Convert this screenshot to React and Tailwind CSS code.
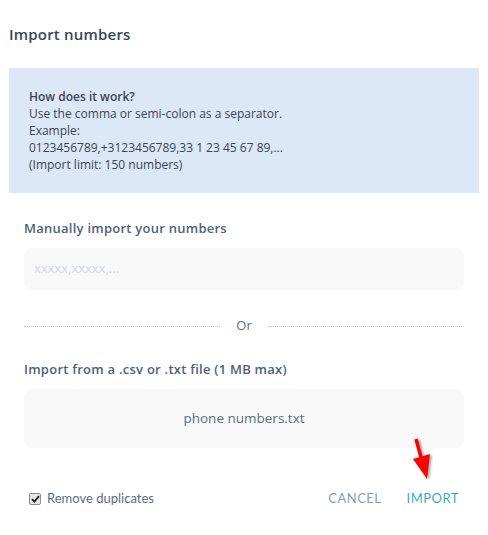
import React from 'react';

const App = () => {
    return (
        <div className="w-[488px] h-[535px] bg-white text-[#3d4a5c]" style={{ fontFamily: '"Open Sans", Lato, sans-serif' }}>
            <div className="pt-[24px] pl-[9px] h-[68px]">
                <h1 className="text-[15px] font-semibold leading-[20px] text-[#3a4656] tracking-[0.2px]">Import numbers</h1>
            </div>

            <div className="ml-[9px] w-[470px] h-[125px] bg-[#dce8f7] px-[20px] pt-[20px] text-[12px] leading-[17px] text-[#3b4452]">
                <p className="font-semibold">How does it work?</p>
                <p>Use the comma or semi-colon as a separator.</p>
                <p>Example:</p>
                <p>0123456789,+3123456789,33 1 23 45 67 89,...</p>
                <p>(Import limit: 150 numbers)</p>
            </div>

            <div className="px-[24px] w-[488px]">
                <h2 className="mt-[26px] text-[13px] font-semibold leading-[18px] tracking-[0.25px] text-[#4f5f7a]">Manually import your numbers</h2>
                <div className="mt-[11px] w-[440px] h-[42px] rounded-[8px] bg-[#f8f8f8] flex items-center px-[10px]">
                    <span className="text-[13px] text-[#d3d8df]">xxxxx,xxxxx,...</span>
                </div>

                <div className="mt-[26px] w-[440px] flex items-center h-[20px]">
                    <div className="flex-1 border-t border-dotted border-[#b9bfc7]"></div>
                    <span className="px-[16px] text-[13px] text-[#5e6e86]">Or</span>
                    <div className="flex-1 border-t border-dotted border-[#b9bfc7]"></div>
                </div>

                <h2 className="mt-[24px] text-[13px] font-semibold leading-[18px] tracking-[0.25px] text-[#4f5f7a]">Import from a .csv or .txt file (1 MB max)</h2>
                <div className="relative mt-[11px] w-[440px] h-[59px] rounded-[8px] bg-[#f8f8f8] flex items-center justify-center">
                    <span className="text-[13.5px] text-[#5d6d86]">phone numbers.txt</span>
                    <svg className="absolute left-[386px] top-[46px]" width="24" height="48" viewBox="0 0 24 48" style={{ filter: 'drop-shadow(2px 1px 1px rgba(0,0,0,0.35))' }}>
                        <line x1="6" y1="4" x2="12" y2="26" stroke="#ff0000" strokeWidth="3.5" strokeLinecap="butt" />
                        <polygon points="3,24 20,19 17,44" fill="#ff0000" />
                    </svg>
                </div>

                <div className="mt-[41px] flex items-center justify-between w-[440px]">
                    <label className="flex items-center ml-[5px]">
                        <span className="w-[12px] h-[12px] rounded-[2px] border border-[#8a8a8a] bg-[#e6e6e6] flex items-center justify-center">
                            <svg width="9" height="8" viewBox="0 0 9 8">
                                <path d="M1 4.2 L3.4 6.6 L8 1.2" fill="none" stroke="#222" strokeWidth="1.8" />
                            </svg>
                        </span>
                        <span className="ml-[6px] text-[13px] text-[#5d6d86]" style={{ fontFamily: 'Lato, sans-serif' }}>Remove duplicates</span>
                    </label>
                    <div className="flex items-center gap-[25px] text-[13px] tracking-[0.5px] mr-[5px]" style={{ fontFamily: 'Lato, sans-serif' }}>
                        <button className="text-[#8e9cae]">CANCEL</button>
                        <button className="text-[#39aeb6]">IMPORT</button>
                    </div>
                </div>
            </div>
        </div>
    );
};

export default App;
